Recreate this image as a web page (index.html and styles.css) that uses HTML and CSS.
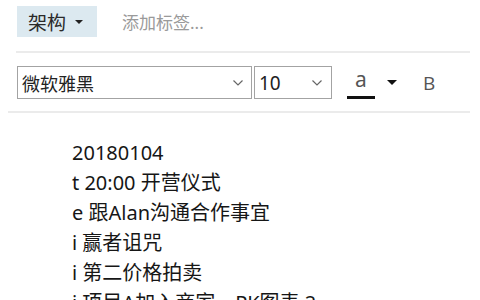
FILE: index.html
```html
<!DOCTYPE html>
<html lang="zh">
<head>
<meta charset="utf-8">
<link rel="stylesheet" href="styles.css">
</head>
<body>
<div class="page">
  <div class="tags">
    <div class="tag">架构 <span class="tri"></span></div>
    <div class="add">添加标签...</div>
  </div>
  <div class="sep1"></div>
  <div class="toolbar">
    <div class="sel font"><span>微软雅黑</span><svg class="chev" width="12" height="8" viewBox="0 0 12 8"><path d="M1.5 1.5 L6 6 L10.5 1.5" fill="none" stroke="#666" stroke-width="1.2"/></svg></div>
    <div class="sel size"><span>10</span><svg class="chev" width="12" height="8" viewBox="0 0 12 8"><path d="M1.5 1.5 L6 6 L10.5 1.5" fill="none" stroke="#666" stroke-width="1.2"/></svg></div>
    <div class="color"><span class="a">a</span></div>
    <span class="tri dark"></span>
    <div class="bold">B</div>
  </div>
  <div class="sep2"></div>
  <div class="content">
    <div>20180104</div>
    <div>t 20:00 开营仪式</div>
    <div>e 跟Alan沟通合作事宜</div>
    <div>i 赢者诅咒</div>
    <div>i 第二价格拍卖</div>
    <div>i 项目A加入商家，PK图表 2</div>
  </div>
</div>
</body>
</html>
```

FILE: styles.css
```css
html, body {
  margin: 0;
  padding: 0;
  background: #fff;
  overflow: hidden;
}
.page {
  width: 480px;
  height: 300px;
  overflow: hidden;
  font-family: "Noto Sans", "Noto Sans CJK SC", sans-serif;
  color: #1f1f1f;
}
.tags {
  display: flex;
  align-items: center;
  padding: 6px 0 0 17px;
  height: 31px;
}
.tag {
  display: flex;
  align-items: center;
  height: 31px;
  padding: 0 14px 0 11px;
  background: #dce9f0;
  font-size: 19px;
  color: #2a2a2a;
  gap: 9px;
}
.tri {
  display: inline-block;
  width: 0;
  height: 0;
  border-left: 4px solid transparent;
  border-right: 4px solid transparent;
  border-top: 4px solid #222;
}
.add {
  margin-left: 25px;
  font-size: 17px;
  color: #9a9a9a;
}
.sep1 {
  margin: 14px 10px 0 16px;
  height: 2px;
  background: #ebebeb;
}
.toolbar {
  display: flex;
  align-items: center;
  padding: 13px 0 0 17px;
  height: 33px;
}
.sel {
  box-sizing: border-box;
  height: 33px;
  border: 1px solid #a3a3a3;
  display: flex;
  align-items: center;
  justify-content: space-between;
  font-size: 18px;
  color: #222;
}
.font {
  width: 235px;
  padding: 0 7px 0 4px;
}
.size {
  width: 78px;
  margin-left: 2px;
  padding: 0 8px 0 4px;
  font-size: 19px;
}
.chev {
  display: block;
}
.color {
  margin-left: 15px;
  width: 28px;
  height: 33px;
  display: flex;
  justify-content: center;
  align-items: flex-start;
  border-bottom: 3px solid #111;
  box-sizing: border-box;
}
.a {
  font-size: 21px;
  line-height: 26px;
  color: #555;
}
.tri.dark {
  margin-left: 12px;
  border-left-width: 5px;
  border-right-width: 5px;
  border-top: 5px solid #111;
}
.bold {
  margin-left: 26px;
  font-size: 19px;
  color: #555;
  font-family: "Open Sans", sans-serif;
}
.sep2 {
  margin: 12px 10px 0 8px;
  height: 2px;
  background: #ebebeb;
}
.content {
  padding: 25px 0 0 72px;
  font-size: 20px;
  line-height: 30px;
  color: #161616;
}
```
